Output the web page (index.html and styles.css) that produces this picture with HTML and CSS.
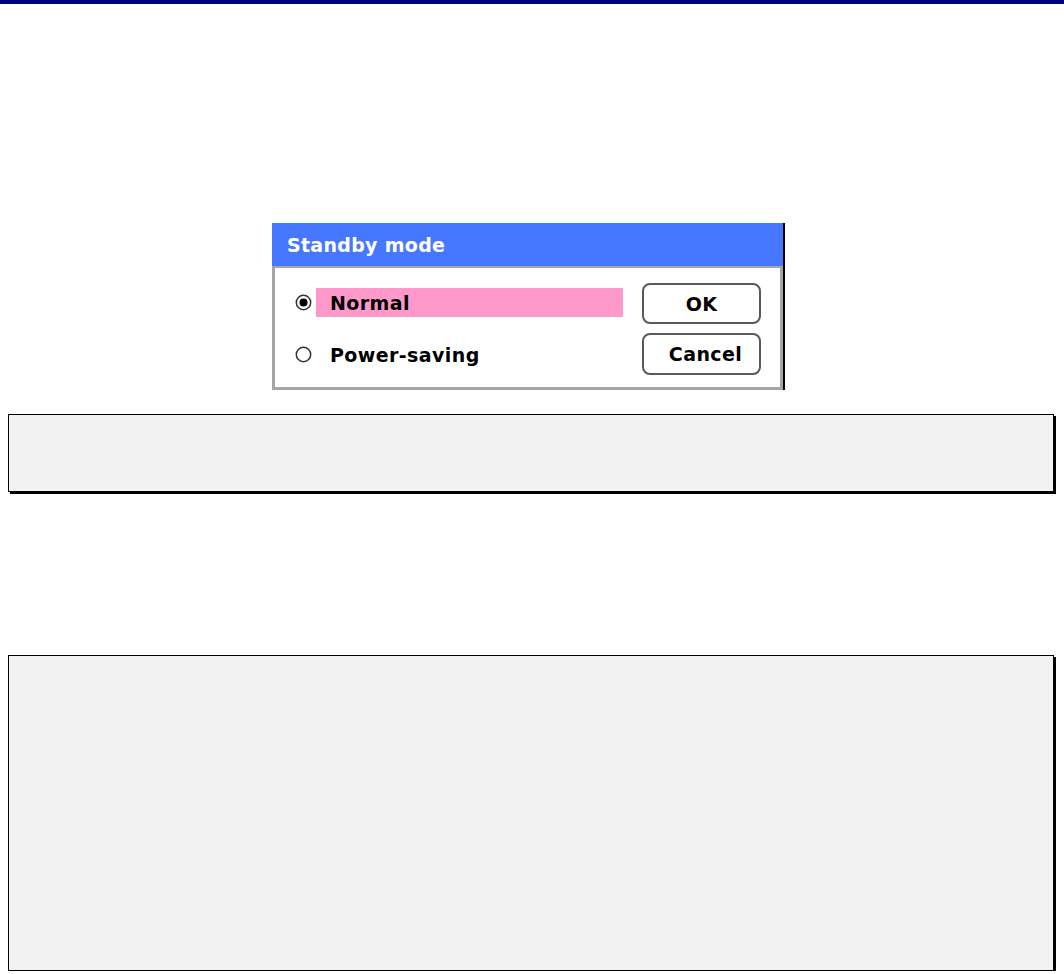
FILE: index.html
```html
<!DOCTYPE html>
<html lang="en">
<head>
    <meta charset="UTF-8">
    <title>Standby mode</title>
    <link rel="stylesheet" href="styles.css">
</head>
<body>
    <div class="top-bar"></div>

    <!-- Standby mode dialog -->
    <div class="figure">
        <div class="dialog">
            <div class="dialog-title">Standby mode</div>
            <div class="dialog-body">
                <div class="options">
                    <div class="option">
                        <svg class="radio" width="17" height="17" viewBox="0 0 17 17">
                            <circle cx="8.5" cy="8.5" r="7.2" fill="#fff" stroke="#333" stroke-width="1.5"/>
                            <circle cx="8.5" cy="8.5" r="4" fill="#000"/>
                        </svg>
                        <span class="option-label selected">Normal</span>
                    </div>
                    <div class="option">
                        <svg class="radio" width="17" height="17" viewBox="0 0 17 17">
                            <circle cx="8.5" cy="8.5" r="7.2" fill="#fff" stroke="#333" stroke-width="1.5"/>
                        </svg>
                        <span class="option-label">Power-saving</span>
                    </div>
                </div>
                <div class="buttons">
                    <button class="dlg-button">OK</button>
                    <button class="dlg-button cancel">Cancel</button>
                </div>
            </div>
        </div>
    </div>

    <!-- Note boxes -->
    <div class="note-box short"></div>
    <div class="note-box tall"></div>
</body>
</html>
```

FILE: styles.css
```css
/* General */
* {
    margin: 0;
    padding: 0;
    box-sizing: border-box;
}
body {
    background: #fff;
    font-family: "DejaVu Sans", "Liberation Sans", sans-serif;
    width: 1064px;
}
.top-bar {
    height: 4px;
    background: #000080;
}

/* Dialog */
.figure {
    margin-top: 219px;
    padding-left: 272px;
}
.dialog {
    width: 513px;
    border-right: 2px solid #000;
}
.dialog-title {
    height: 43px;
    background: #4678ff;
    color: #fff;
    font-weight: bold;
    font-size: 19px;
    letter-spacing: 0.3px;
    line-height: 44px;
    padding-left: 15px;
}
.dialog-body {
    height: 124px;
    background: #fff;
    border: 3px solid #a5a5a5;
    border-top-width: 2px;
    display: flex;
    justify-content: space-between;
    padding: 15px 19px 12px 20px;
}
.options {
    display: flex;
    flex-direction: column;
    gap: 23px;
    padding-top: 5px;
}
.option {
    display: flex;
    align-items: center;
    gap: 4px;
}
.radio {
    display: block;
}
.option-label {
    width: 307px;
    height: 29px;
    line-height: 30px;
    padding-left: 14px;
    font-weight: bold;
    font-size: 19px;
    letter-spacing: 0.4px;
    color: #000;
}
.option-label.selected {
    background: #ff99cc;
}
.buttons {
    display: flex;
    flex-direction: column;
    gap: 9px;
}
.dlg-button {
    width: 119px;
    height: 41px;
    background: #fff;
    border: 2px solid #5a5a5a;
    border-radius: 8px;
    font-family: "DejaVu Sans", "Liberation Sans", sans-serif;
    font-weight: bold;
    font-size: 19px;
    letter-spacing: 0.4px;
    color: #000;
}
.dlg-button.cancel {
    height: 42px;
    padding-left: 8px;
}

/* Note boxes */
.note-box {
    margin-left: 8px;
    width: 1046px;
    background: #f2f2f2;
    border: 1px solid #000;
    box-shadow: 2px 2px 0 #000;
}
.note-box.short {
    margin-top: 24px;
    height: 78px;
}
.note-box.tall {
    margin-top: 163px;
    height: 316px;
}
```
